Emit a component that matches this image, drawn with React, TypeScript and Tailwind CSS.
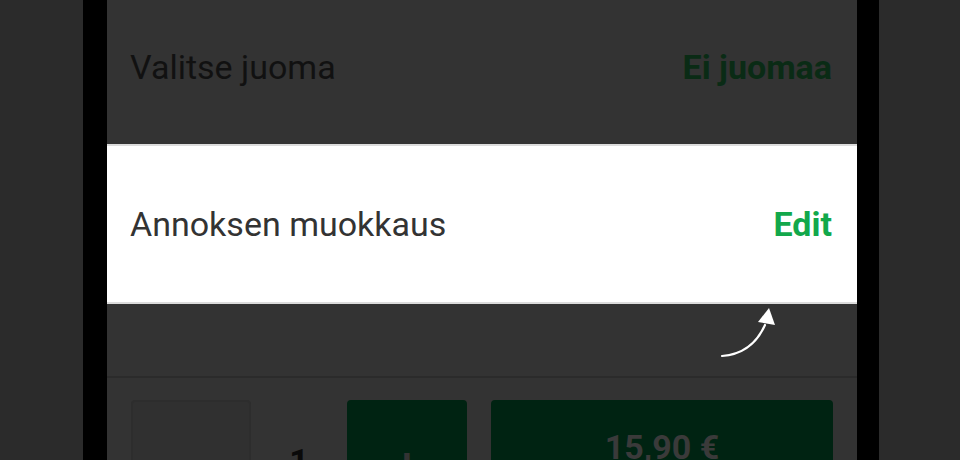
import React from 'react';

/** 編集ヒントの矢印 */
const HintArrow: React.FC = () => (
  <svg
    className="absolute left-[600px] top-[295px] pointer-events-none"
    width="100"
    height="70"
    viewBox="600 295 100 70"
  >
    <path
      d="M615 356 Q645 354 658 325"
      fill="none"
      stroke="#ffffff"
      strokeWidth="2.2"
      strokeLinecap="round"
    />
    <polygon points="662,308 651,322 668,325" fill="#ffffff" />
  </svg>
);

export default function App() {
  return (
    <div
      className="w-[960px] h-[460px] overflow-hidden bg-[#2b2b2b] flex justify-center"
      style={{ fontFamily: 'Roboto, "Liberation Sans", sans-serif' }}
    >
      <div className="ml-[2px] flex h-full">
        {/* 端末フレーム */}
        <div className="w-[24px] bg-black" />
        <div className="relative w-[750px] h-full bg-[#333333] flex flex-col">
          {/* ドリンク選択 (暗転) */}
          <div className="shrink-0 h-[144px] flex items-center justify-between pl-[23px] pr-[25px] pb-[10px]">
            <span className="text-[34px] text-[#111111]">Valitse juoma</span>
            <span className="text-[34px] font-bold text-[#0a2b15]">Ei juomaa</span>
          </div>

          {/* ハイライト行 */}
          <div className="shrink-0 h-[160px] bg-white border-y-2 border-[#dcdcdc] flex items-center justify-between pl-[23px] pr-[25px]">
            <span className="text-[34px] text-[#333333]">Annoksen muokkaus</span>
            <span className="text-[34px] font-bold text-[#12a84b]">Edit</span>
          </div>

          <div className="shrink-0 h-[74px] border-b-2 border-[#2b2b2b]" />

          {/* 下部バー (暗転) */}
          <div className="shrink-0 flex items-start gap-[24px] px-[24px] pt-[22px]">
            <div className="w-[120px] h-[90px] rounded-[4px] border-2 border-[#2d2d2d] bg-[#303030]" />
            <div className="w-[48px] pt-[44px] text-center text-[34px] font-bold text-[#0a0a0a] leading-none">
              1
            </div>
            <div className="w-[120px] h-[90px] rounded-[4px] bg-[#002312] flex justify-center pt-[44px] text-[40px] font-bold text-[#333333] leading-none">
              +
            </div>
            <div className="flex-1 h-[90px] rounded-[4px] bg-[#002312] flex justify-center pt-[30px] text-[34px] font-bold text-[#3a3a3a] leading-none">
              15,90 €
            </div>
          </div>

          <HintArrow />
        </div>
        <div className="w-[22px] bg-black" />
      </div>
    </div>
  );
}
